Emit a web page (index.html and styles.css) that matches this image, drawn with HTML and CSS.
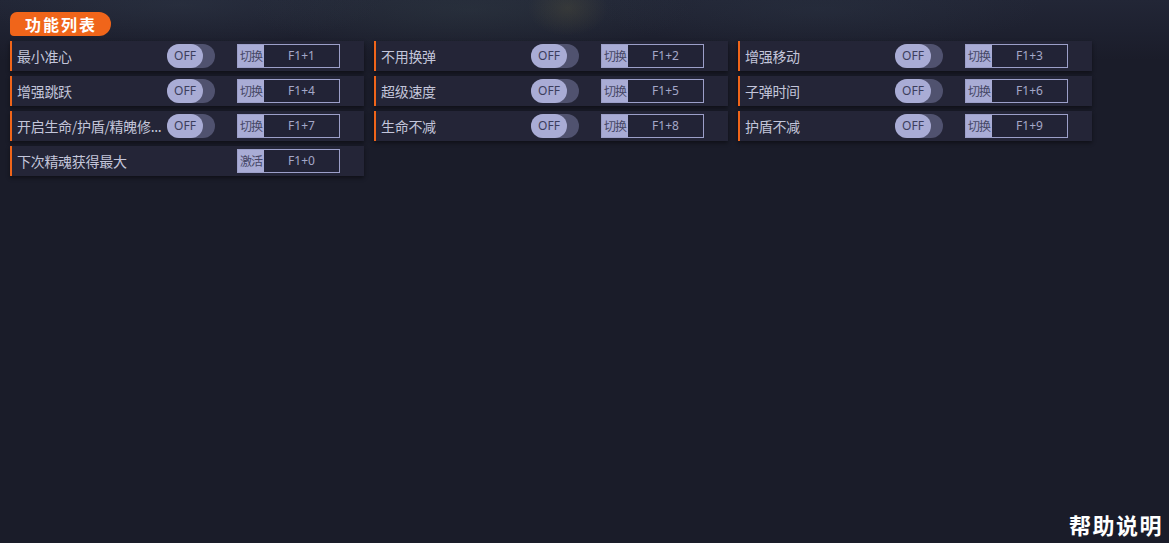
FILE: index.html
```html
<!DOCTYPE html>
<html lang="zh">
<head>
<meta charset="utf-8">
<title>功能列表</title>
<link rel="stylesheet" href="styles.css">
</head>
<body>
<div class="page">
  <div class="badge">功能列表</div>
  <div class="grid">
    <div class="row"><span class="label">最小准心</span><span class="toggle"><span class="knob">OFF</span></span><span class="key"><span class="act">切换</span><span class="hk">F1+1</span></span></div>
    <div class="row"><span class="label">不用换弹</span><span class="toggle"><span class="knob">OFF</span></span><span class="key"><span class="act">切换</span><span class="hk">F1+2</span></span></div>
    <div class="row"><span class="label">增强移动</span><span class="toggle"><span class="knob">OFF</span></span><span class="key"><span class="act">切换</span><span class="hk">F1+3</span></span></div>
    <div class="row"><span class="label">增强跳跃</span><span class="toggle"><span class="knob">OFF</span></span><span class="key"><span class="act">切换</span><span class="hk">F1+4</span></span></div>
    <div class="row"><span class="label">超级速度</span><span class="toggle"><span class="knob">OFF</span></span><span class="key"><span class="act">切换</span><span class="hk">F1+5</span></span></div>
    <div class="row"><span class="label">子弹时间</span><span class="toggle"><span class="knob">OFF</span></span><span class="key"><span class="act">切换</span><span class="hk">F1+6</span></span></div>
    <div class="row"><span class="label">开启生命/护盾/精魄修...</span><span class="toggle"><span class="knob">OFF</span></span><span class="key"><span class="act">切换</span><span class="hk">F1+7</span></span></div>
    <div class="row"><span class="label">生命不减</span><span class="toggle"><span class="knob">OFF</span></span><span class="key"><span class="act">切换</span><span class="hk">F1+8</span></span></div>
    <div class="row"><span class="label">护盾不减</span><span class="toggle"><span class="knob">OFF</span></span><span class="key"><span class="act">切换</span><span class="hk">F1+9</span></span></div>
    <div class="row"><span class="label wide">下次精魂获得最大</span><span class="key"><span class="act">激活</span><span class="hk">F1+0</span></span></div>
  </div>
  <div class="help">帮助说明</div>
</div>
</body>
</html>
```
FILE: styles.css
```css
html, body {
  margin: 0;
  padding: 0;
}
body {
  background-color: #1a1c29;
  background-image:
    radial-gradient(ellipse 40px 28px at 568px 8px, rgba(95, 90, 60, 0.3), transparent),
    radial-gradient(ellipse 220px 45px at 470px 10px, rgba(55, 70, 75, 0.3), transparent),
    radial-gradient(ellipse 200px 40px at 180px 5px, rgba(50, 60, 75, 0.35), transparent),
    radial-gradient(ellipse 220px 40px at 820px 10px, rgba(45, 55, 70, 0.35), transparent),
    linear-gradient(to bottom, #222636 0px, #1e2130 30px, #1a1c29 60px);
  background-repeat: no-repeat;
  font-family: "Noto Sans CJK SC", "Noto Sans", sans-serif;
  overflow: hidden;
}
.page {
  height: 543px;
  box-sizing: border-box;
  display: flex;
  flex-direction: column;
  align-items: flex-start;
  padding: 12px 6px 4px 10px;
}
.badge {
  height: 24px;
  width: 101px;
  box-sizing: border-box;
  background: #f0651a;
  border-radius: 7px 12px 12px 4px;
  color: #ffffff;
  font-weight: 700;
  font-size: 16px;
  line-height: 24px;
  letter-spacing: 2px;
  padding-left: 15px;
}
.grid {
  margin-top: 5px;
  display: grid;
  grid-template-columns: repeat(3, 354px);
  column-gap: 10px;
  row-gap: 5px;
}
.row {
  height: 30px;
  box-sizing: border-box;
  border-left: 2px solid #f0651a;
  background: #242537;
  box-shadow: 0 2px 4px rgba(0, 0, 0, 0.45);
  display: flex;
  align-items: center;
  padding-left: 5px;
}
.label {
  width: 150px;
  flex: none;
  white-space: nowrap;
  overflow: hidden;
  color: #c3c5da;
  font-size: 14px;
  line-height: 28px;
  letter-spacing: -0.3px;
}
.label.wide {
  width: 198px;
}
.toggle {
  width: 48px;
  height: 24px;
  flex: none;
  border-radius: 12px;
  background: #50526f;
  display: flex;
}
.knob {
  width: 36px;
  height: 24px;
  border-radius: 12px;
  background: #a9acd5;
  color: #3c3e5c;
  font-family: "Noto Sans", sans-serif;
  font-size: 12px;
  line-height: 24px;
  text-align: center;
}
.key {
  margin-left: 22px;
  width: 103px;
  height: 24px;
  box-sizing: border-box;
  border: 1px solid #9c9fc9;
  background: #222336;
  display: flex;
  flex: none;
}
.act {
  width: 26px;
  background: #a9acd5;
  color: #454766;
  font-size: 12px;
  line-height: 22px;
  text-align: center;
  letter-spacing: -1px;
}
.hk {
  flex: 1;
  text-align: center;
  color: #a4a7c8;
  font-family: "Noto Sans", sans-serif;
  font-size: 12px;
  line-height: 22px;
}
.help {
  margin-top: auto;
  align-self: flex-end;
  color: #ffffff;
  font-weight: 700;
  font-size: 22px;
  line-height: 26px;
  letter-spacing: 1.5px;
  margin-bottom: 2px;
}
```
